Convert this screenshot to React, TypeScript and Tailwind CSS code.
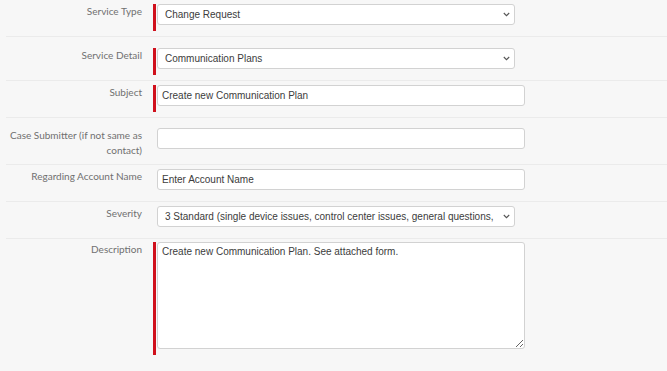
import React from "react";

const RED = "border-[#d0101c]";

function Chevron() {
  return (
    <svg
      className="pointer-events-none absolute right-[5px] top-[8px]"
      width="7"
      height="5"
      viewBox="0 0 7 5"
      fill="none"
    >
      <path d="M0.8 1 L3.5 3.7 L6.2 1" stroke="#555" strokeWidth="1.1" />
    </svg>
  );
}

function Label({ children }: { children: React.ReactNode }) {
  return (
    <div className="w-[136px] shrink-0 text-right text-[10px] leading-[15px] text-[#707070] font-['Lato',sans-serif]">
      {children}
    </div>
  );
}

function Field({ required, children }: { required?: boolean; children: React.ReactNode }) {
  return (
    <div
      className={
        "ml-[11px] flex border-l-[3px] pl-px " +
        (required ? RED + " pb-[6px]" : "border-transparent")
      }
    >
      {children}
    </div>
  );
}

function Select({ value }: { value: string }) {
  return (
    <div className="relative w-[358px] h-[21px]">
      <select
        className="block w-full h-full appearance-none bg-white border border-[#d2d2d2] rounded-[3px] pl-[7px] pr-[20px] text-[10px] text-[#3c3c3c] font-['Liberation_Sans',Arial,sans-serif] outline-none"
        defaultValue={value}
      >
        <option value={value}>{value}</option>
      </select>
      <Chevron />
    </div>
  );
}

function Input({ value }: { value: string }) {
  return (
    <input
      className="block w-[368px] h-[21px] bg-white border border-[#d2d2d2] rounded-[3px] pl-[4px] text-[10px] text-[#3c3c3c] font-['Liberation_Sans',Arial,sans-serif] outline-none"
      defaultValue={value}
      readOnly
    />
  );
}

export default function App() {
  const row = "flex items-start border-b border-[#ebebeb]";
  return (
    <div className="min-h-[371px] bg-[#f7f7f7] pl-[6px]">
      <div className={row + " h-[37px] pt-[4px]"}>
        <Label>Service Type</Label>
        <Field required>
          <Select value="Change Request" />
        </Field>
      </div>
      <div className={row + " h-[44px] pt-[11px]"}>
        <Label>Service Detail</Label>
        <Field required>
          <Select value="Communication Plans" />
        </Field>
      </div>
      <div className={row + " h-[37px] pt-[4px]"}>
        <Label>Subject</Label>
        <Field required>
          <Input value="Create new Communication Plan" />
        </Field>
      </div>
      <div className={row + " h-[47px] pt-[10px]"}>
        <Label>
          Case Submitter (if not same as
          <br />
          contact)
        </Label>
        <Field>
          <Input value="" />
        </Field>
      </div>
      <div className={row + " h-[37px] pt-[4px]"}>
        <Label>Regarding Account Name</Label>
        <Field>
          <Input value="Enter Account Name" />
        </Field>
      </div>
      <div className={row + " h-[37px] pt-[4px]"}>
        <Label>Severity</Label>
        <Field>
          <Select value="3 Standard (single device issues, control center issues, general questions, etc.)" />
        </Field>
      </div>
      <div className="flex items-start pt-[3px] pb-[15px]">
        <Label>Description</Label>
        <Field required>
          <textarea
            className="block w-[368px] h-[107px] bg-white border border-[#d2d2d2] rounded-[3px] px-[4px] pt-[2px] text-[10px] leading-[14px] text-[#3c3c3c] font-['Liberation_Sans',Arial,sans-serif] outline-none resize"
            defaultValue="Create new Communication Plan. See attached form."
          />
        </Field>
      </div>
    </div>
  );
}
